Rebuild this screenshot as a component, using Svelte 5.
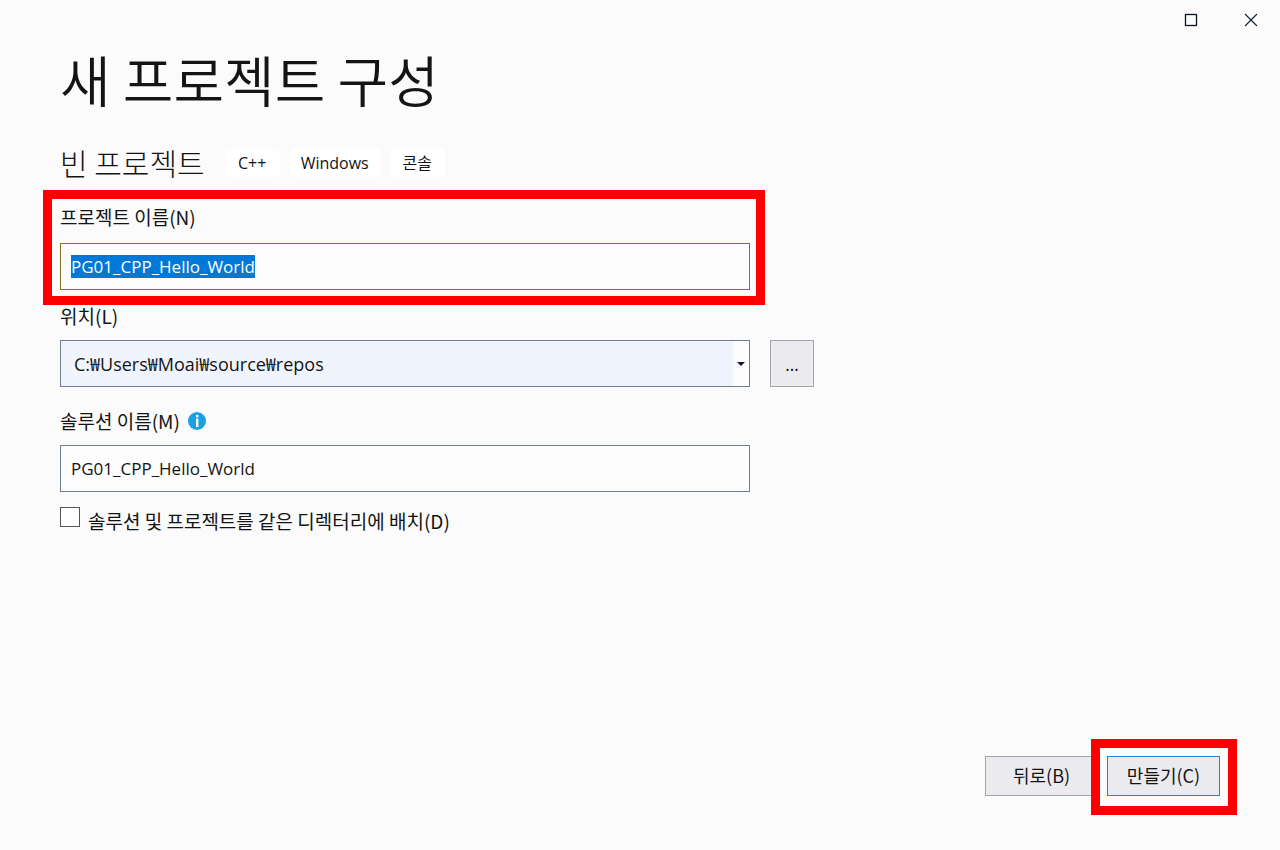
<script lang="ts">
	import { onMount } from "svelte";

	let projectName = "PG01_CPP_Hello_World";
	let solutionName = "PG01_CPP_Hello_World";
	let location = "C:₩Users₩Moai₩source₩repos";
	let sameDirectory = false;

	const tags = ["C++", "Windows", "콘솔"];

	let nameInput: HTMLInputElement;

	onMount(() => {
		nameInput.focus();
		nameInput.select();
	});
</script>

<div class="window">
	<header class="titlebar">
		<button class="window-button" aria-label="최대화">
			<svg width="14" height="14" viewBox="0 0 14 14">
				<rect x="1.5" y="1.5" width="11" height="11" fill="none" stroke="#0c1428" stroke-width="1.3" />
			</svg>
		</button>
		<button class="window-button" aria-label="닫기">
			<svg width="14" height="14" viewBox="0 0 14 14">
				<path d="M1 1L13 13M13 1L1 13" fill="none" stroke="#1c2438" stroke-width="1.2" />
			</svg>
		</button>
	</header>

	<main>
		<h1>새 프로젝트 구성</h1>

		<div class="template">
			<h2>빈 프로젝트</h2>
			<ul class="tags">
				{#each tags as tag}
					<li>{tag}</li>
				{/each}
			</ul>
		</div>

		<form id="project-form" on:submit|preventDefault>
			<div class="field highlight">
				<label for="project-name">프로젝트 이름(N)</label>
				<input
					id="project-name"
					class="text-box active"
					type="text"
					spellcheck="false"
					bind:this={nameInput}
					bind:value={projectName}
				/>
			</div>

			<div class="field location">
				<label for="location">위치(L)</label>
				<div class="location-row">
					<div class="combo">
						<select id="location" bind:value={location}>
							<option>C:₩Users₩Moai₩source₩repos</option>
						</select>
						<svg class="arrow" width="8" height="4" viewBox="0 0 8 4">
							<path d="M0 0H8L4 4Z" fill="#0c1428" />
						</svg>
					</div>
					<button class="browse" type="button">...</button>
				</div>
			</div>

			<div class="field solution">
				<div class="label-row">
					<label for="solution-name">솔루션 이름(M)</label>
					<svg class="info" width="18" height="18" viewBox="0 0 18 18">
						<circle cx="9" cy="9" r="9" fill="#1ba1e2" />
						<path d="M8 3H10.4V5.2H8ZM8 6.6H10.4V15H8Z" fill="#fff" />
					</svg>
				</div>
				<input
					id="solution-name"
					class="text-box"
					type="text"
					spellcheck="false"
					bind:value={solutionName}
				/>
			</div>

			<div class="check">
				<input id="same-directory" type="checkbox" bind:checked={sameDirectory} />
				<label for="same-directory">솔루션 및 프로젝트를 같은 디렉터리에 배치(D)</label>
			</div>
		</form>
	</main>

	<footer>
		<button class="action back" type="button">뒤로(B)</button>
		<div class="highlight create">
			<button class="action primary" type="submit" form="project-form">만들기(C)</button>
		</div>
	</footer>
</div>

<style>
	:global(body) {
		margin: 0;
		background: #fbfbfb;
	}

	.window {
		box-sizing: border-box;
		display: flex;
		flex-direction: column;
		min-height: 100vh;
		padding-bottom: 35px;
		background: #fbfbfb;
		color: #141414;
		font-family: "Noto Sans CJK KR", sans-serif;
		font-size: 19px;
		line-height: 22px;
	}

	button,
	input,
	select {
		box-sizing: border-box;
		margin: 0;
		color: inherit;
		font: inherit;
	}

	.titlebar {
		display: flex;
		justify-content: flex-end;
	}

	.window-button {
		display: flex;
		align-items: center;
		justify-content: center;
		width: 60px;
		height: 40px;
		padding: 0 0 0 2px;
		border: none;
		background: none;
	}

	main {
		padding: 0 60px;
	}

	h1 {
		margin: 2px 0 0;
		font-size: 55px;
		font-weight: 350;
		line-height: 72px;
	}

	.template {
		display: flex;
		align-items: center;
		gap: 20px;
		margin-top: 29px;
	}

	h2 {
		margin: 0;
		padding-bottom: 2px;
		font-size: 30px;
		font-weight: 300;
		line-height: 38px;
	}

	.tags {
		display: flex;
		gap: 10px;
		margin: 0;
		padding: 0;
		list-style: none;
	}

	.tags li {
		box-sizing: border-box;
		min-width: 55px;
		padding: 3px 11px;
		border-radius: 4px;
		background: #fff;
		font-family: "Open Sans", "Noto Sans CJK KR", sans-serif;
		font-size: 16px;
		text-align: center;
	}

	form {
		max-width: 754px;
		margin-top: 7px;
	}

	.field {
		display: flex;
		flex-direction: column;
	}

	.highlight {
		border: 9px solid #ff0000;
	}

	.field.highlight {
		gap: 15px;
		margin: 0 49px 0 -17px;
		padding: 7px 6px 6px 8px;
	}

	.text-box {
		width: 100%;
		height: 47px;
		padding: 0 10px;
		border: 1px solid #717f90;
		border-radius: 0;
		background: #fdfdfd;
		font-family: "Open Sans", "Noto Sans CJK KR", sans-serif;
		font-size: 17px;
		outline: none;
	}

	.text-box.active {
		border-color: #8c6f1e;
	}

	.text-box::selection {
		background: #0078d7;
		color: #fff;
	}

	.location {
		gap: 13px;
	}

	.location-row {
		display: grid;
		grid-template-columns: 1fr 44px;
		gap: 20px;
	}

	.combo {
		display: grid;
		align-items: center;
	}

	.combo > * {
		grid-area: 1 / 1;
	}

	select {
		appearance: none;
		width: 100%;
		height: 47px;
		padding: 0 20px 0 13px;
		border: 1px solid #717f90;
		border-radius: 0;
		background: linear-gradient(to left, #fdfdfd 16px, #f0f4fd 16px);
		font-family: "Open Sans", "Noto Sans CJK KR", sans-serif;
		font-size: 18px;
	}

	.arrow {
		justify-self: end;
		margin-right: 5px;
		pointer-events: none;
	}

	.browse {
		padding: 0;
		border: 1px solid #a5a5a9;
		background: #ebebef;
		font-size: 16px;
	}

	.solution {
		gap: 13px;
		margin: 23px 64px 0 0;
	}

	.label-row {
		display: flex;
		align-items: center;
		gap: 8px;
	}

	.check {
		display: flex;
		align-items: flex-start;
		gap: 8px;
		margin-top: 15px;
	}

	.check input {
		appearance: none;
		width: 20px;
		height: 20px;
		border: 1px solid #55555a;
		background: #fff;
	}

	.check input:checked {
		background: #0078d7;
	}

	.check label {
		margin-top: 3px;
	}

	footer {
		display: flex;
		align-items: center;
		justify-content: flex-end;
		margin-top: auto;
		padding-right: 43px;
	}

	.action {
		width: 113px;
		height: 40px;
		padding: 0 0 2px;
		border: 1px solid #a5a5a9;
		background: #ebebef;
		font-size: 18px;
	}

	.back {
		margin: 0 -7px 2px 0;
	}

	.create {
		position: relative;
		display: flex;
		padding: 8px 8px 10px 7px;
		background: #fbfbfb;
	}

	.primary {
		border-color: #1a86e0;
	}
</style>
